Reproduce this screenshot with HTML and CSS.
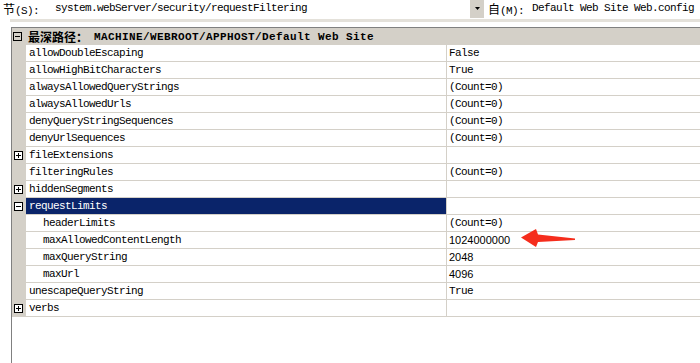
FILE: index.html
```html
<!DOCTYPE html>
<html lang="zh-CN">
<head>
  <meta charset="UTF-8" />
  <title>requestFiltering</title>
  <link rel="stylesheet" href="styles.css">
</head>
<body>
  <div class="toolbar">
    <span class="label"><span class="cjk">节</span>(<u>S</u>):</span>
    <span class="field">system.webServer/security/requestFiltering</span>
    <span class="dropbtn"><svg width="7" height="4" viewBox="0 0 7 4"><path d="M1 0H6L3.5 3Z" fill="#000"/></svg></span>
    <span class="label from"><span class="cjk">自</span>(<u>M</u>):</span>
    <span class="field">Default Web Site Web.config</span>
  </div>
  <div class="strip"></div>

  <div class="grid">
    <div class="category">
      <svg class="box" width="9" height="9" viewBox="0 0 9 9"><rect x="0.5" y="0.5" width="8" height="8" fill="none" stroke="#000"/><path d="M2 4.5H7" stroke="#000"/></svg>
      <span class="cjk">最深路径：</span><span class="path">MACHINE/WEBROOT/APPHOST/Default Web Site</span>
    </div>

    <div class="row"><span class="gutter"></span><span class="name">allowDoubleEscaping</span><span class="value">False</span></div>
    <div class="row"><span class="gutter"></span><span class="name">allowHighBitCharacters</span><span class="value">True</span></div>
    <div class="row"><span class="gutter"></span><span class="name">alwaysAllowedQueryStrings</span><span class="value">(Count=0)</span></div>
    <div class="row"><span class="gutter"></span><span class="name">alwaysAllowedUrls</span><span class="value">(Count=0)</span></div>
    <div class="row"><span class="gutter"></span><span class="name">denyQueryStringSequences</span><span class="value">(Count=0)</span></div>
    <div class="row"><span class="gutter"></span><span class="name">denyUrlSequences</span><span class="value">(Count=0)</span></div>
    <div class="row"><span class="gutter"><svg class="box" width="9" height="9" viewBox="0 0 9 9"><rect x="0.5" y="0.5" width="8" height="8" fill="#fff" stroke="#000"/><path d="M2 4.5H7M4.5 2V7" stroke="#000"/></svg></span><span class="name">fileExtensions</span><span class="value"></span></div>
    <div class="row"><span class="gutter"></span><span class="name">filteringRules</span><span class="value">(Count=0)</span></div>
    <div class="row"><span class="gutter"><svg class="box" width="9" height="9" viewBox="0 0 9 9"><rect x="0.5" y="0.5" width="8" height="8" fill="#fff" stroke="#000"/><path d="M2 4.5H7M4.5 2V7" stroke="#000"/></svg></span><span class="name">hiddenSegments</span><span class="value"></span></div>
    <div class="row"><span class="gutter"><svg class="box" width="9" height="9" viewBox="0 0 9 9"><rect x="0.5" y="0.5" width="8" height="8" fill="#fff" stroke="#000"/><path d="M2 4.5H7" stroke="#000"/></svg></span><span class="name selected">requestLimits</span><span class="value"></span></div>
    <div class="row"><span class="gutter"></span><span class="name child">headerLimits</span><span class="value">(Count=0)</span></div>
    <div class="row"><span class="gutter"></span><span class="name child">maxAllowedContentLength</span><span class="value num">1024000000</span></div>
    <div class="row"><span class="gutter"></span><span class="name child">maxQueryString</span><span class="value num">2048</span></div>
    <div class="row"><span class="gutter"></span><span class="name child">maxUrl</span><span class="value num">4096</span></div>
    <div class="row"><span class="gutter"></span><span class="name">unescapeQueryString</span><span class="value">True</span></div>
    <div class="row"><span class="gutter"><svg class="box" width="9" height="9" viewBox="0 0 9 9"><rect x="0.5" y="0.5" width="8" height="8" fill="#fff" stroke="#000"/><path d="M2 4.5H7M4.5 2V7" stroke="#000"/></svg></span><span class="name">verbs</span><span class="value"></span></div>
  </div>

  <svg class="arrow" width="700" height="363" viewBox="0 0 700 363">
    <path d="M521 237.5L536 229L538 234.5L575 238.5L575 240L538 242L536 247Z" fill="#f52d1c"/>
  </svg>
</body>
</html>
```

FILE: styles.css
```css
body {
  margin: 0;
  height: 363px;
  overflow: hidden;
  background: #fff;
  font-family: "Liberation Mono", "Noto Sans CJK SC", monospace;
  font-size: 11px;
  letter-spacing: -0.6px;
  color: #000;
  display: flex;
  flex-direction: column;
  position: relative;
}
.cjk {
  font-family: "Noto Sans CJK SC", sans-serif;
  font-size: 12px;
  letter-spacing: 0;
}
.toolbar {
  display: flex;
  align-items: stretch;
  height: 19px;
  line-height: 17px;
}
.label {
  width: 47px;
  padding-left: 3px;
  white-space: nowrap;
}
.label u {
  text-decoration: none;
}
.label.from {
  width: 39px;
  padding-left: 4px;
}
.field {
  padding-left: 5px;
  white-space: nowrap;
}
.toolbar .field:nth-child(2) {
  width: 415px;
}
.dropbtn {
  width: 14px;
  height: 18px;
  background: #d4d0c8;
  display: flex;
  align-items: center;
  justify-content: center;
}
.strip {
  margin-left: 10px;
  height: 3px;
  background: #e4e1da;
  margin-bottom: 5px;
}
.grid {
  flex: 1;
  margin-left: 11px;
  border-left: 1px solid #808080;
}
.category {
  height: 17px;
  border-top: 1px solid #808080;
  background: #d4d0c8;
  display: flex;
  align-items: center;
  font-weight: bold;
  white-space: nowrap;
}
.category .box {
  margin: 0 6px 0 1px;
}
.category .cjk {
  font-weight: bold;
  margin-right: 6px;
}
.path {
  letter-spacing: 0.4px;
}
.row {
  display: grid;
  grid-template-columns: 14px 420px 1fr;
  height: 17px;
}
.gutter {
  background: #d4d0c8;
  display: flex;
  align-items: center;
}
.gutter .box {
  margin-left: 2px;
}
.name, .value {
  line-height: 17px;
  border-bottom: 1px solid #d4d0c8;
  white-space: nowrap;
  overflow: hidden;
}
.name {
  padding-left: 3px;
}
.name.child {
  padding-left: 17px;
}
.name.selected {
  background: #0a246a;
  color: #fff;
}
.value {
  border-left: 1px solid #d4d0c8;
  padding-left: 2px;
}
.value.num {
  font-family: "Liberation Sans", sans-serif;
  letter-spacing: 0;
}
.arrow {
  position: absolute;
  left: 0;
  top: 0;
  pointer-events: none;
}
```
